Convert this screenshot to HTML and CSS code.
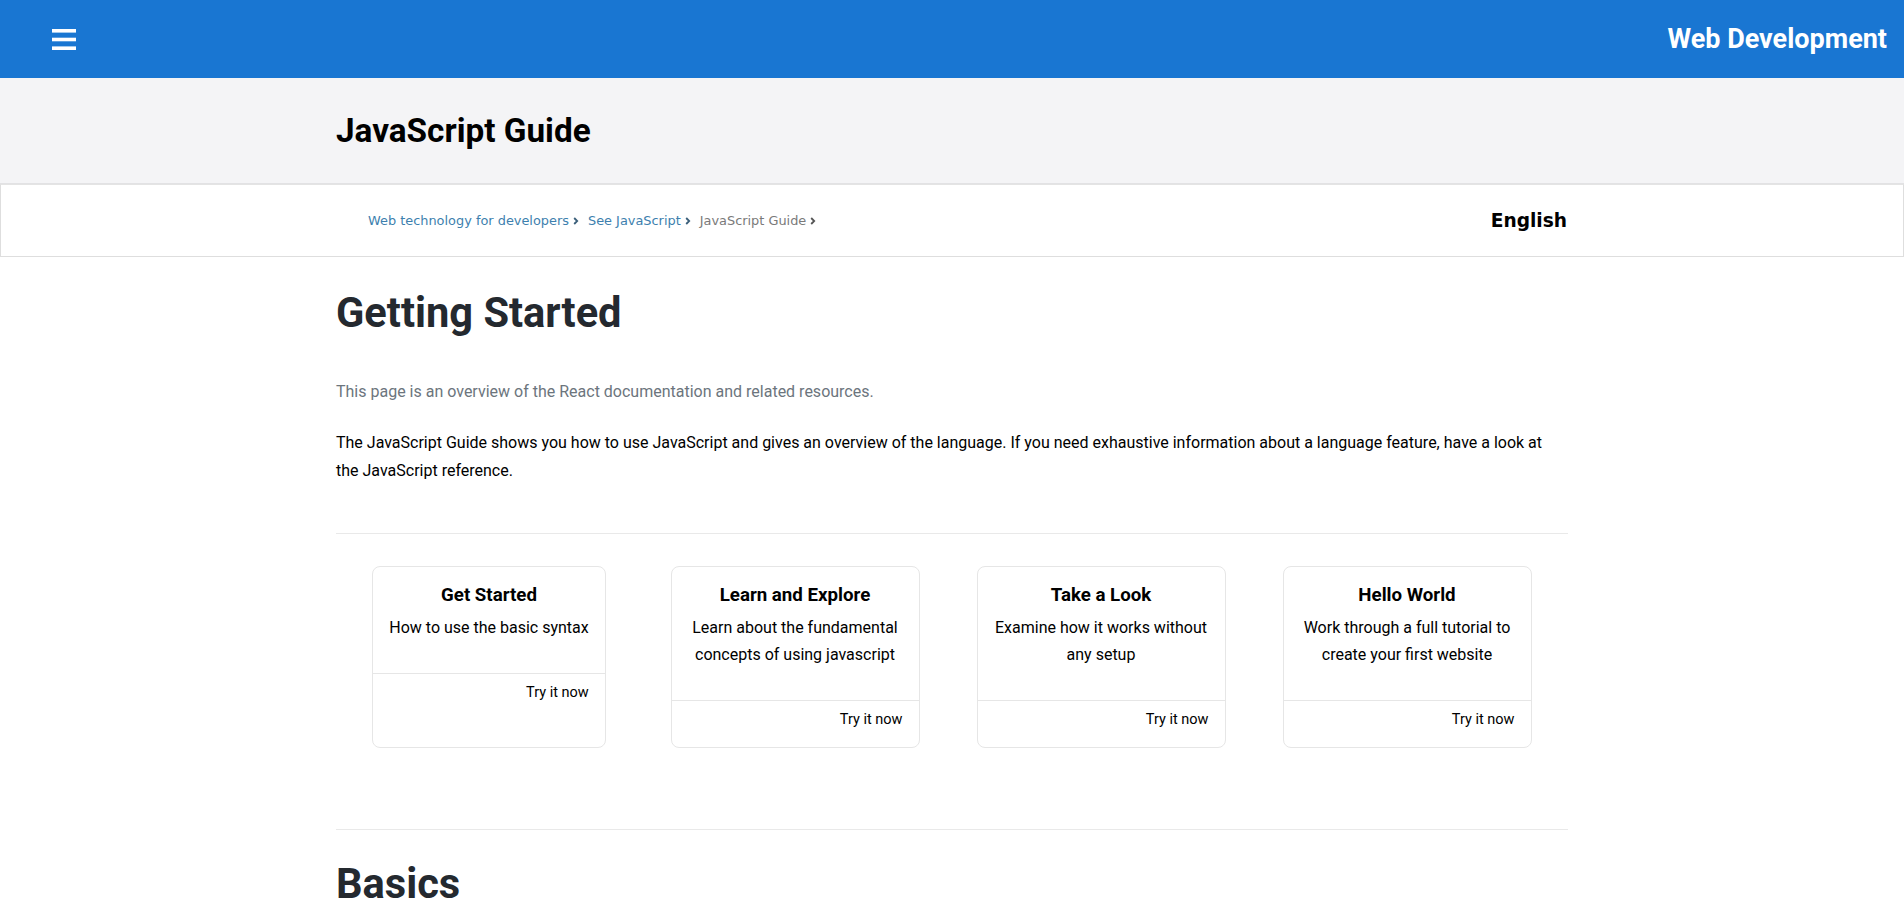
FILE: index.html
```html
<!DOCTYPE html>
<html lang="en">
<head>
<meta charset="utf-8">
<title>JavaScript Guide</title>
<link rel="stylesheet" href="styles.css">
</head>
<body>
<header class="appbar">
  <button class="menu-btn" aria-label="Menu">
    <svg width="24" height="21" viewBox="0 0 24 21"><rect x="0" y="0" width="24" height="3.6" fill="#fff"/><rect x="0" y="8.7" width="24" height="3.6" fill="#fff"/><rect x="0" y="17.4" width="24" height="3.6" fill="#fff"/></svg>
  </button>
  <div class="appbar-title">Web Development</div>
</header>

<section class="page-head">
  <div class="container">
    <h2 class="page-title">JavaScript Guide</h2>
  </div>
</section>

<nav class="crumbs-bar">
  <div class="container crumbs-inner">
    <ol class="crumbs">
      <li class="crumb"><a href="#">Web technology for developers</a><svg class="chev" width="6" height="8" viewBox="0 0 6 8"><path d="M1.2 1 L4.2 4 L1.2 7" fill="none" stroke="#3b5f7a" stroke-width="1.8"/></svg></li>
      <li class="crumb"><a href="#">See JavaScript</a><svg class="chev" width="6" height="8" viewBox="0 0 6 8"><path d="M1.2 1 L4.2 4 L1.2 7" fill="none" stroke="#3b5f7a" stroke-width="1.8"/></svg></li>
      <li class="crumb current"><span>JavaScript Guide</span><svg class="chev" width="6" height="8" viewBox="0 0 6 8"><path d="M1.2 1 L4.2 4 L1.2 7" fill="none" stroke="#555" stroke-width="1.8"/></svg></li>
    </ol>
    <span class="lang">English</span>
  </div>
</nav>

<main class="container content">
  <h1 class="section-title">Getting Started</h1>
  <p class="lead">This page is an overview of the React documentation and related resources.</p>
  <p class="body-text">The JavaScript Guide shows you how to use JavaScript and gives an overview of the language. If you need exhaustive information about a language feature, have a look at the JavaScript reference.</p>
  <hr class="rule rule-top">
  <div class="cards">
    <div class="card">
      <div class="card-body">
        <h3 class="card-title">Get Started</h3>
        <p class="card-text">How to use the basic syntax</p>
      </div>
      <div class="card-foot">Try it now</div>
    </div>
    <div class="card">
      <div class="card-body">
        <h3 class="card-title">Learn and Explore</h3>
        <p class="card-text">Learn about the fundamental concepts of using javascript</p>
      </div>
      <div class="card-foot">Try it now</div>
    </div>
    <div class="card">
      <div class="card-body">
        <h3 class="card-title">Take a Look</h3>
        <p class="card-text">Examine how it works without any setup</p>
      </div>
      <div class="card-foot">Try it now</div>
    </div>
    <div class="card">
      <div class="card-body">
        <h3 class="card-title">Hello World</h3>
        <p class="card-text">Work through a full tutorial to create your first website</p>
      </div>
      <div class="card-foot">Try it now</div>
    </div>
  </div>
  <hr class="rule rule-bottom">
  <h1 class="section-title basics">Basics</h1>
</main>
</body>
</html>
```

FILE: styles.css
```css
* { box-sizing: border-box; }
html, body { margin: 0; padding: 0; }
body {
  font-family: Roboto, "Liberation Sans", Arial, sans-serif;
  color: #000;
  background: #fff;
  overflow: hidden;
}
.container {
  width: 1232px;
  margin: 0 auto;
}

/* App bar */
.appbar {
  height: 78px;
  background: #1976d2;
  display: flex;
  align-items: center;
  justify-content: space-between;
  padding: 0 17px 0 52px;
}
.menu-btn {
  background: none;
  border: 0;
  padding: 0;
  margin: 0;
  width: 24px;
  height: 21px;
  display: block;
  cursor: pointer;
}
.menu-btn svg { display: block; }
.appbar-title {
  color: #fff;
  font-weight: 700;
  font-size: 27px;
  line-height: 1;
}

/* Page head */
.page-head {
  background: #f4f4f6;
  padding: 34px 0 33px;
  border-bottom: 1px solid #e2e2e4;
}
.page-title {
  margin: 0;
  font-size: 33.3px;
  line-height: 38px;
  font-weight: 700;
  color: #000;
}

/* Breadcrumbs */
.crumbs-bar {
  border: 1px solid #dedede;
  border-top-color: #e4e4e4;
}
.crumbs-inner {
  height: 71px;
  display: flex;
  align-items: center;
  justify-content: space-between;
  padding-left: 32px;
}
.crumbs {
  list-style: none;
  margin: 0;
  padding: 0;
  display: flex;
  align-items: center;
  font-family: "DejaVu Sans", Verdana, sans-serif;
  font-size: 12.9px;
}
.crumb {
  display: flex;
  align-items: center;
  margin-right: 9px;
}
.crumb a {
  color: #3d7fae;
  text-decoration: none;
}
.crumb.current span { color: #7a7a7a; }
.chev { margin-left: 4px; display: block; }
.lang {
  font-family: "DejaVu Sans", Verdana, sans-serif;
  font-weight: 700;
  font-size: 18.6px;
  color: #000;
  padding-right: 1px;
}

/* Content */
.content { padding-top: 32px; }
.section-title {
  margin: 0;
  font-size: 41.6px;
  line-height: 48px;
  font-weight: 700;
  color: #24292f;
}
.lead {
  margin: 41px 0 0;
  font-size: 16px;
  line-height: 28px;
  color: #6c757d;
}
.body-text {
  margin: 23px 0 0;
  font-size: 16px;
  line-height: 28px;
  color: #000;
}
.rule {
  border: 0;
  border-top: 1px solid #e9e9e9;
  margin: 0;
}
.rule-top { margin-top: 48px; }
.cards {
  width: 1224px;
  margin-top: 32px;
  display: grid;
  grid-template-columns: repeat(4, 1fr);
  justify-items: center;
}
.card {
  max-width: 249px;
  border: 1px solid #e6e6e6;
  border-radius: 8px;
  text-align: center;
  background: #fff;
}
.card-body {
  padding: 16px 16px 16px;
  border-bottom: 1px solid #e6e6e6;
}
.card-title {
  margin: 0 0 7px;
  font-size: 18.7px;
  line-height: 24px;
  font-weight: 700;
}
.card-text {
  margin: 0 0 16px;
  font-size: 16px;
  line-height: 27px;
}
.card-foot {
  text-align: right;
  padding: 8px 16px 16px;
  font-size: 14.5px;
  line-height: 22px;
}
.rule-bottom { margin-top: 81px; }
.basics { margin-top: 30px; }
```
